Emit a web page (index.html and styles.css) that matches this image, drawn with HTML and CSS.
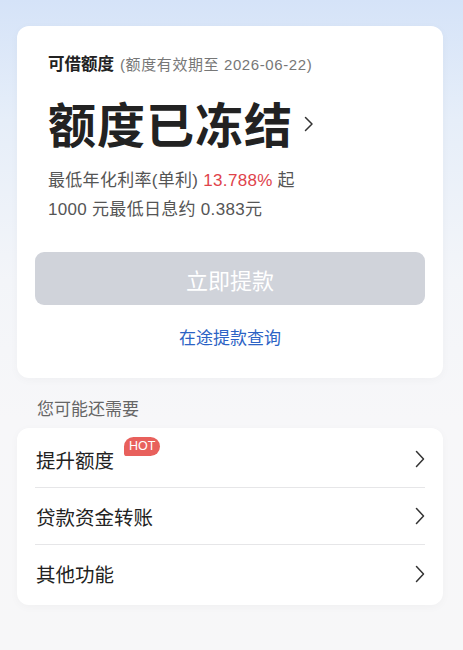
FILE: index.html
```html
<!DOCTYPE html>
<html lang="zh-CN">
<head>
<meta charset="utf-8">
<title>额度</title>
<link rel="stylesheet" href="styles.css">
</head>
<body>
<div class="page">
  <section class="card quota">
    <div class="quota-body">
      <div class="label-line"><span class="label">可借额度</span><span class="expire">(额度有效期至 2026-06-22)</span></div>
      <div class="status">额度已冻结<svg class="status-arrow" width="10" height="16" viewBox="0 0 10 16"><path d="M1.5 1.5 L8 8 L1.5 14.5" fill="none" stroke="#333" stroke-width="1.5" stroke-linecap="round" stroke-linejoin="round"/></svg></div>
      <div class="rate">最低年化利率(单利) <span class="red">13.788%</span> 起</div>
      <div class="rate">1000 元最低日息约 0.383元</div>
    </div>
    <button class="btn">立即提款</button>
    <div class="link">在途提款查询</div>
  </section>

  <div class="section-title">您可能还需要</div>

  <section class="card list">
    <div class="row">
      <span class="row-label">提升额度<span class="hot">HOT</span></span>
      <svg class="chev" width="10" height="18" viewBox="0 0 10 18"><path d="M1.5 1.5 L8.5 9 L1.5 16.5" fill="none" stroke="#333" stroke-width="1.5" stroke-linecap="round" stroke-linejoin="round"/></svg>
    </div>
    <div class="row">
      <span class="row-label">贷款资金转账</span>
      <svg class="chev" width="10" height="18" viewBox="0 0 10 18"><path d="M1.5 1.5 L8.5 9 L1.5 16.5" fill="none" stroke="#333" stroke-width="1.5" stroke-linecap="round" stroke-linejoin="round"/></svg>
    </div>
    <div class="row">
      <span class="row-label">其他功能</span>
      <svg class="chev" width="10" height="18" viewBox="0 0 10 18"><path d="M1.5 1.5 L8.5 9 L1.5 16.5" fill="none" stroke="#333" stroke-width="1.5" stroke-linecap="round" stroke-linejoin="round"/></svg>
    </div>
  </section>
</div>
</body>
</html>
```

FILE: styles.css
```css
* { box-sizing: border-box; }
html, body { margin: 0; padding: 0; }
body {
  width: 463px;
  height: 650px;
  overflow: hidden;
  font-family: "Liberation Sans", "Noto Sans CJK SC", sans-serif;
  background: linear-gradient(180deg, #d5e3f8 0px, #e6eef9 120px, #f3f5f9 280px, #f7f7f9 420px, #f7f7f8 650px);
  color: #222;
}
.page {
  padding: 26px 20px 0 17px;
}
.card {
  background: #fff;
  border-radius: 12px;
  box-shadow: 0 2px 10px rgba(0, 0, 0, 0.03);
}
.quota {
  padding: 26px 18px 28px;
}
.quota-body {
  padding-left: 13px;
}
.label-line {
  display: flex;
  align-items: baseline;
  height: 22px;
  line-height: 22px;
  white-space: nowrap;
}
.label {
  font-family: "Noto Sans CJK SC", sans-serif;
  font-size: 16.5px;
  font-weight: 700;
  color: #222;
}
.expire {
  font-size: 15px;
  color: #777;
  margin-left: 6px;
  letter-spacing: 0.6px;
}
.status {
  margin-top: 18px;
  font-family: "Noto Sans CJK SC", sans-serif;
  font-size: 48px;
  line-height: 60px;
  font-weight: 600;
  color: #222;
  display: flex;
  align-items: center;
  letter-spacing: 1px;
}
.status-arrow {
  margin-left: 11px;
  margin-top: 4px;
}
.rate {
  font-size: 17px;
  line-height: 29px;
  color: #555;
  white-space: nowrap;
  letter-spacing: 0.3px;
}
.status + .rate { margin-top: 14px; }
.red { color: #e0434b; }
.btn {
  display: block;
  width: 100%;
  height: 53px;
  margin-top: 28px;
  border: none;
  border-radius: 9px;
  background: #d0d3da;
  color: #fff;
  font-family: "Noto Sans CJK SC", sans-serif;
  font-size: 22px;
  letter-spacing: 0;
}
.link {
  margin-top: 23px;
  text-align: center;
  font-size: 17px;
  line-height: 22px;
  color: #2c63c5;
}
.section-title {
  margin: 21px 0 7px 20px;
  font-size: 17px;
  line-height: 22px;
  color: #666;
}
.list {
  padding: 3px 18px;
}
.row {
  height: 57px;
  display: flex;
  align-items: center;
  justify-content: space-between;
  border-bottom: 1px solid #e6e6e8;
}
.row:last-child { border-bottom: none; }
.row-label {
  position: relative;
  font-size: 19.5px;
  color: #222;
  padding-left: 1px;
}
.hot {
  position: absolute;
  left: 89px;
  top: -8px;
  height: 19px;
  padding: 0 5px;
  border-radius: 10px 10px 10px 3px;
  background: #e8605c;
  color: #fff;
  font-family: "Liberation Sans", Arial, sans-serif;
  font-size: 12.5px;
  line-height: 19px;
  font-weight: 400;
}
.chev {
  margin-right: 0;
}
```
